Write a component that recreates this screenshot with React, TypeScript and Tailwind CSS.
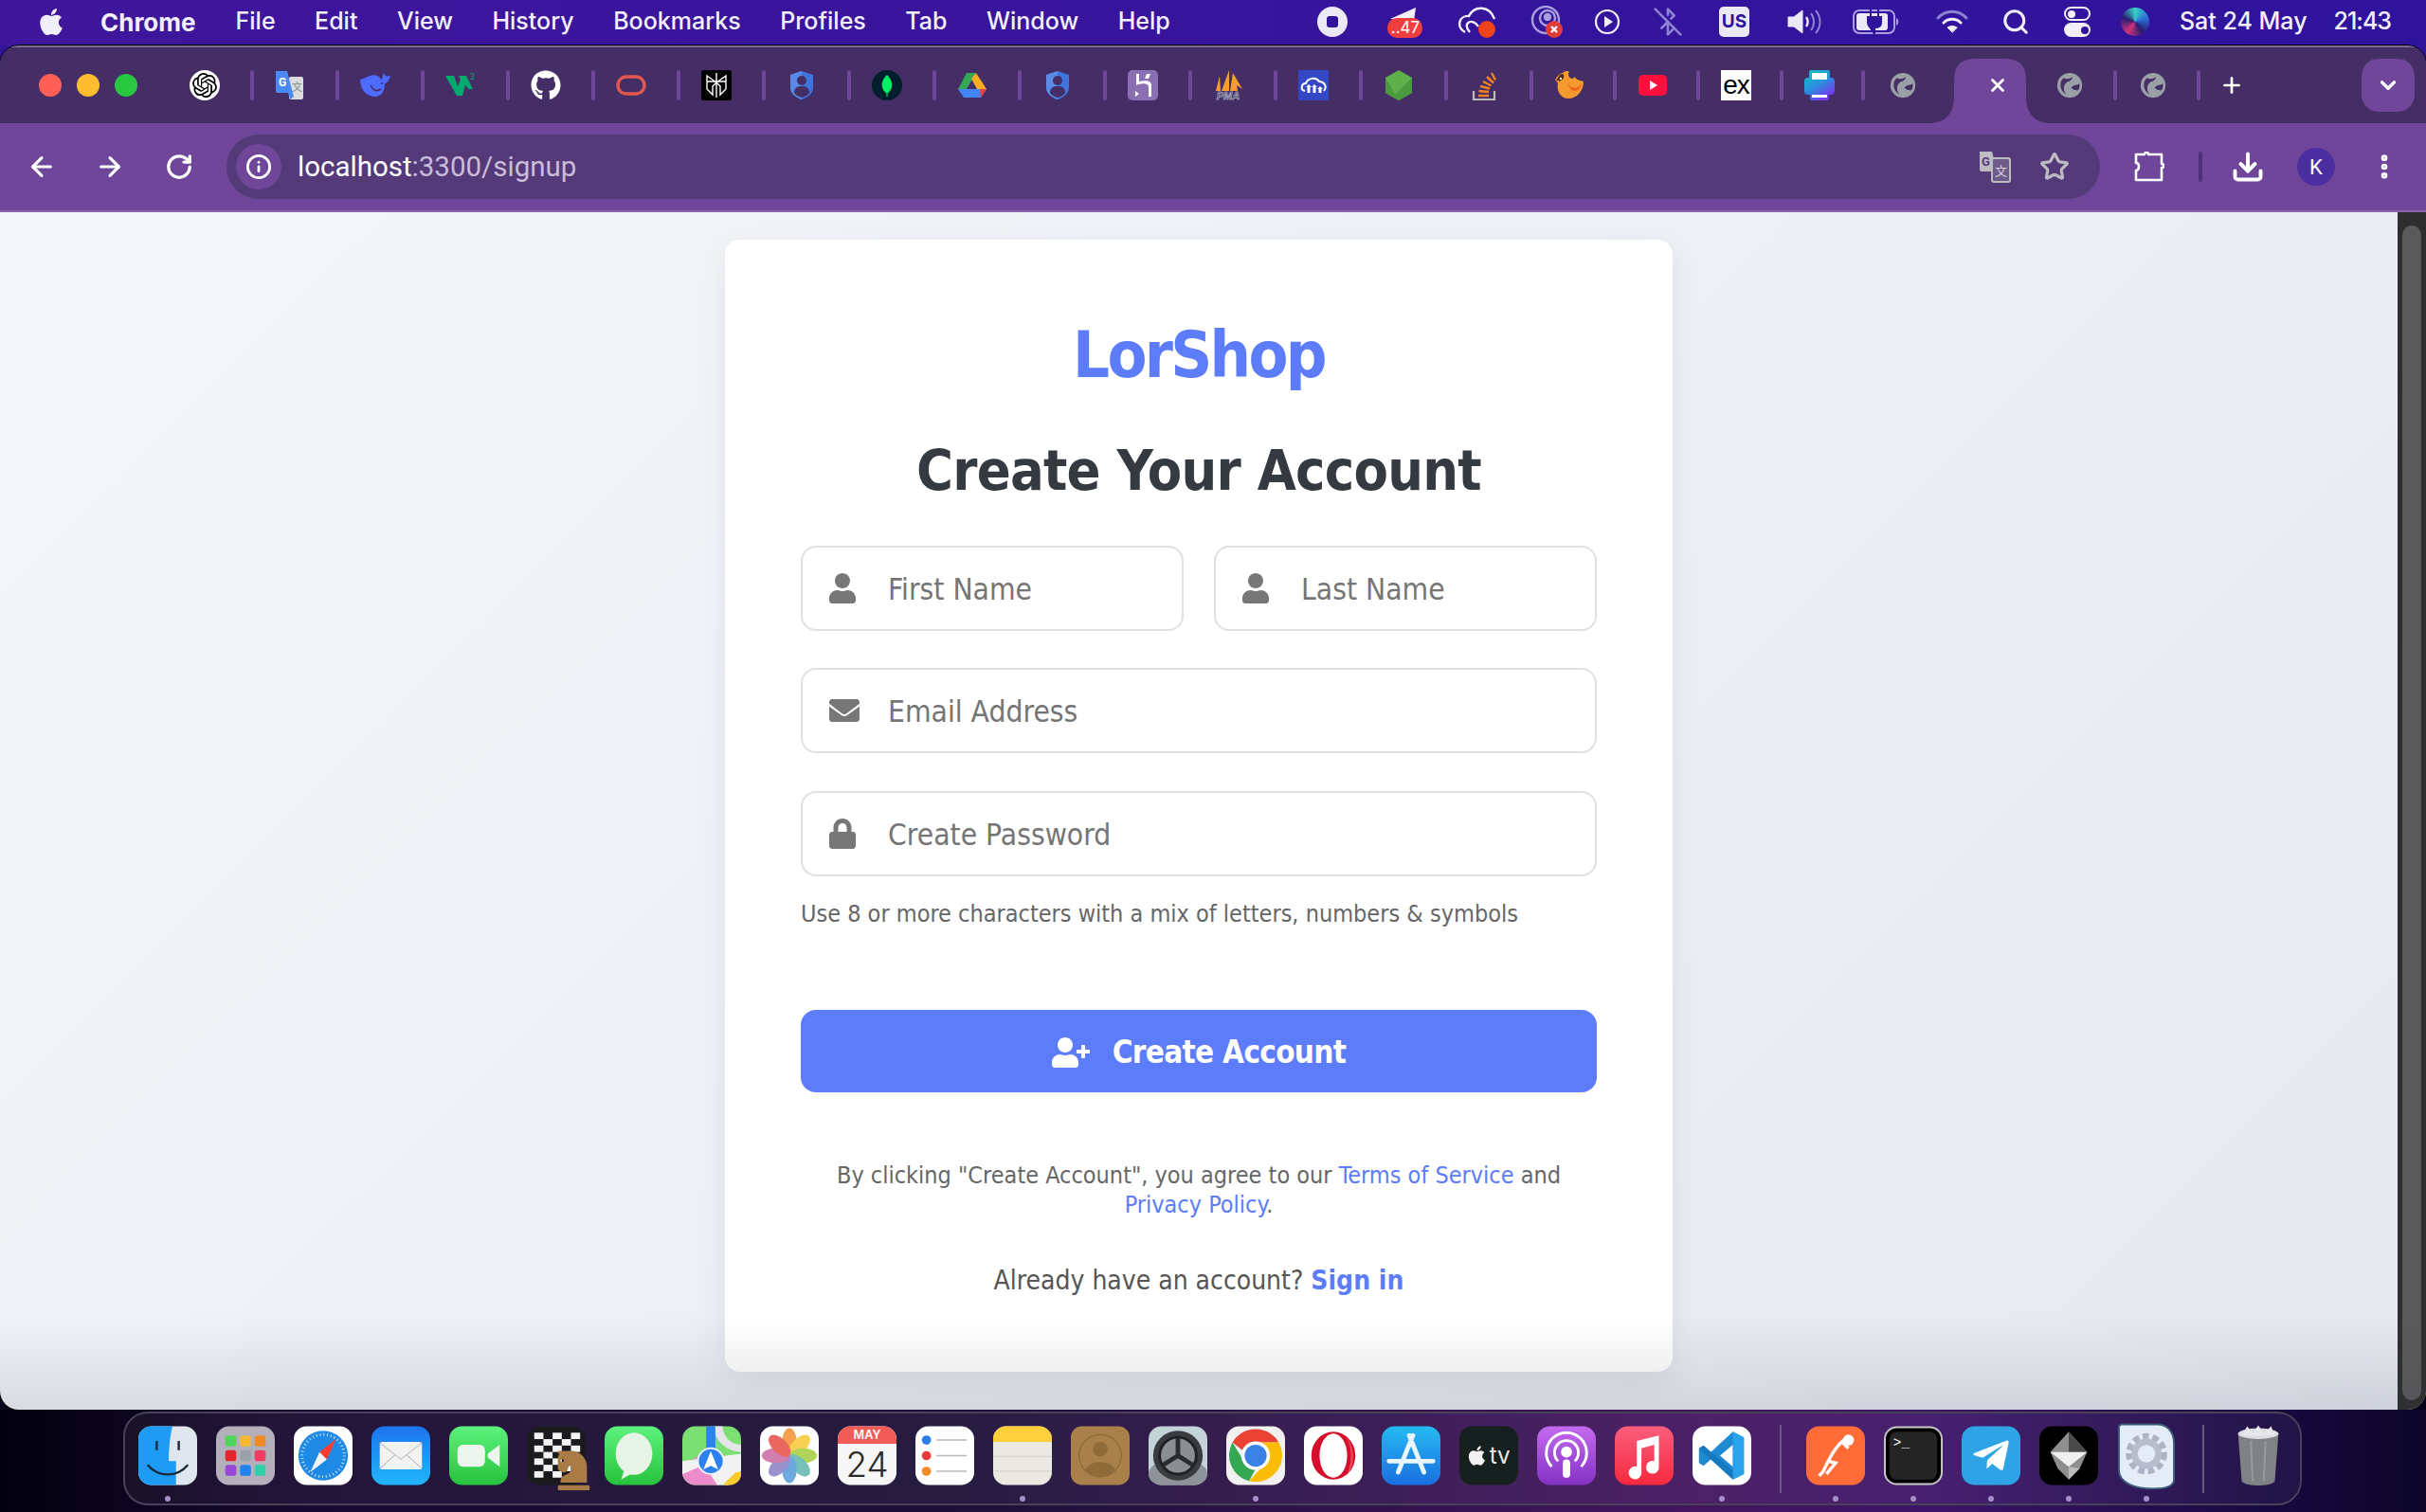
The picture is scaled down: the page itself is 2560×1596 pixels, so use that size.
import type { ReactNode } from "react";
import { ArrowLeft, ArrowRight, BluetoothOff, Download, RotateCw, Search, Star, X, Plus, ChevronDown, EllipsisVertical, Info } from "lucide-react";
import { FaApple, FaChessKnight, FaEnvelope, FaGithub, FaLock, FaTelegramPlane, FaUser, FaUserPlus } from "react-icons/fa";
import { SiOpenai } from "react-icons/si";

const menuItems = ["File", "Edit", "View", "History", "Bookmarks", "Profiles", "Tab", "Window", "Help"];

function Globe() {
  return (
    <svg viewBox="0 0 32 32" className="h-[28px] w-[28px]">
      <circle cx="16" cy="16" r="15" fill="#9aa0a6" />
      <path d="M9 7 C12 9 15 9 19 6 C20 9 16 11 13 12 C10 14 9 17 9 20 C9 23 10 25 12 27 C8 25 5 21 5 16 C5 12 6 9 9 7 Z" fill="#452d66" />
      <path d="M18 19 C20 15 24 17 28 14 C28 17 28 20 26 22 C24 22 21 22 18 19 Z" fill="#452d66" />
    </svg>
  );
}

function ShieldIcon() {
  return (
    <svg viewBox="0 0 32 32" className="h-8 w-8">
      <path d="M16 1 L28 5 V18 C28 25 22 29 16 31 C10 29 4 25 4 18 V5 Z" fill="#3f74dc" />
      <path d="M16 1 L4 5 V18 C4 25 10 29 16 31 Z" fill="#5a8ae6" />
      <circle cx="16" cy="11" r="5" fill="#452d66" />
      <path d="M8 24 C8 18 12 17 16 17 C20 17 24 18 24 24 C22 27 19 28 16 29 C13 28 10 27 8 24 Z" fill="#452d66" />
    </svg>
  );
}

const tabIcons: ReactNode[] = [
  <div key="gpt" className="flex h-8 w-8 items-center justify-center rounded-full bg-white">
    <SiOpenai className="h-[26px] w-[26px] text-black" />
  </div>,
  <svg key="tr" viewBox="0 0 32 32" className="h-8 w-8">
    <rect x="15" y="7" width="15" height="24" rx="2" fill="#dcdcdc" />
    <path d="M1 1 H13 L20 28 L16 31 L14 24 H3 A2 2 0 0 1 1 22 Z" fill="#4a8af4" />
    <text x="4" y="17" fontSize="12" fontWeight="700" fill="#fff" fontFamily="Roboto, sans-serif">G</text>
    <text x="18" y="22" fontSize="11" fill="#7a8a8a" fontFamily="'Noto Sans CJK SC', sans-serif">文</text>
  </svg>,
  <svg key="ds" viewBox="0 0 32 32" className="h-8 w-8">
    <path d="M0 10 C0 22 9 29 17 28 C24 27 26 20 26 14 C28 14 31 11 32 5 C30 7 28 7 27 6 L24 3 C24 7 24 9 22 10 C20 5 14 4 8 7 C4 9 1 10 0 10 Z" fill="#4d6bfe" />
    <path d="M11 16 C14 22 18 23 22 20" stroke="#452d66" strokeWidth="1.6" fill="none" />
    <circle cx="23" cy="14" r="1" fill="#452d66" />
  </svg>,
  <svg key="w3" viewBox="0 0 32 32" className="h-8 w-8">
    <path d="M0 6 H9 L13 17 L16 10 L14 6 H22 L29 20 L25 20 L21 16 L18 27 H12 Z" fill="#04aa6d" />
    <text x="26" y="10" fontSize="9" fill="#04aa6d" fontFamily="Roboto, sans-serif">3</text>
  </svg>,
  <FaGithub key="gh" className="h-8 w-8 text-white" />,
  <svg key="oracle" viewBox="0 0 32 32" className="h-8 w-8">
    <rect x="2" y="7" width="28" height="18" rx="9" fill="none" stroke="#e2574c" strokeWidth="3.5" />
  </svg>,
  <svg key="px" viewBox="0 0 32 32" className="h-8 w-8">
    <rect width="32" height="32" rx="2" fill="#000" />
    <path d="M16 3 V29 M6 6 L16 13 L26 6 V20 L20 26 V17 L16 13 L12 17 V26 L6 20 Z M6 12 H26" stroke="#fff" strokeWidth="1.4" fill="none" />
  </svg>,
  <ShieldIcon key="s1" />,
  <svg key="mongo" viewBox="0 0 32 32" className="h-8 w-8">
    <circle cx="16" cy="16" r="16" fill="#001e2b" />
    <path d="M16 5 C20 9 22 13 21 18 C20 22 18 23 16.6 24.5 L16.5 28 H15.5 L15.4 24.5 C14 23 12 22 11 18 C10 13 12 9 16 5 Z" fill="#00ed64" />
  </svg>,
  <svg key="drive" viewBox="0 0 32 32" className="h-8 w-8">
    <path d="M10 3 H20 L10 20 H1 Z" fill="#34a853" />
    <path d="M20 3 L31 20 H21 L15 9 Z" fill="#fbac20" />
    <path d="M7 29 L1 20 H31 L25 29 Z" fill="#4285f4" />
    <path d="M25 29 L31 20 H24 Z" fill="#ea4335" />
  </svg>,
  <ShieldIcon key="s2" />,
  <svg key="heroku" viewBox="0 0 32 32" className="h-8 w-8">
    <rect width="32" height="32" rx="5" fill="#8a6fb3" />
    <path d="M9 4 V16 C13 14 22 13 22 18 V28 H25 V16 C25 10 17 11 12 12 V4 Z M20 4 H24 L22 9 H18 Z M8 22 L12 25 L8 28 Z" fill="#fff" />
  </svg>,
  <svg key="pma" viewBox="0 0 32 32" className="h-8 w-8">
    <path d="M3 22 L7 6 L8 22 Z M9 22 L17 0 L17 22 Z M18 22 L21 3 L31 20 L25 16 L26 22 Z" fill="#f89c2e" />
    <text x="16" y="31" textAnchor="middle" fontSize="11" fontWeight="700" fontStyle="italic" fill="#38405a" stroke="#d7d9e2" strokeWidth="0.5" fontFamily="'Liberation Sans', sans-serif">PMA</text>
  </svg>,
  <svg key="cloud" viewBox="0 0 32 32" className="h-8 w-8">
    <rect width="32" height="32" fill="#3448c5" />
    <path d="M7 22 C2 21 3 14 8 14 C10 8 19 7 22 12 C27 12 31 17 27 22" stroke="#fff" strokeWidth="2" fill="none" />
    <path d="M11 15 L14 18 H12.5 V24 H9.5 V18 H8 Z M17 15 L20 18 H18.5 V24 H15.5 V18 H14 Z M23 17 L26 20 H24.5 V24 H21.5 V20 H20 Z" fill="#fff" />
  </svg>,
  <svg key="node" viewBox="0 0 32 32" className="h-8 w-8">
    <path d="M16 0 L30 8 V24 L16 32 L2 24 V8 Z" fill="#5fb04a" />
    <path d="M2 8 L16 32 L2 24 Z" fill="#4d9a3c" />
    <path d="M30 8 V24 L16 32 L12 26 Z" fill="#4a9a3f" />
  </svg>,
  <svg key="so" viewBox="0 0 32 32" className="h-8 w-8">
    <path d="M5 22 V31 H27 V22" fill="none" stroke="#bcbbbb" strokeWidth="2.2" />
    <path d="M10 27 H21 M10.5 22 L21 23 M12 17 L22 19.5 M15 12 L23.5 16.5 M19 7 L26 13.5 M24 3 L28 10.5" stroke="#f48024" strokeWidth="2.4" fill="none" />
  </svg>,
  <svg key="bird" viewBox="0 0 32 32" className="h-8 w-8">
    <path d="M1 10 C3 7 5 4 9 3 C12 0 15 1 16 2 C14 4 15 7 18 9 C20 9 21 8 22 7 C23 10 27 11 31 12 C31 22 24 30 15 30 C7 30 2 22 4 14 Z" fill="#f59a2c" />
    <path d="M2 11 L6 5 C9 3 11 4 10 8 C9 11 6 12 4 11 Z" fill="#4a2d1a" />
    <circle cx="7" cy="9" r="1.2" fill="#fff" />
    <path d="M14 14 C18 20 24 20 29 15 C26 24 18 25 14 14 Z" fill="#f0642a" />
  </svg>,
  <svg key="yt" viewBox="0 0 32 32" className="h-8 w-8">
    <rect x="1" y="5" width="30" height="22" rx="5" fill="#ff0f3c" />
    <path d="M13 11 L21 16 L13 21 Z" fill="#fff" />
  </svg>,
  <div key="ex" className="flex h-8 w-8 items-center justify-center bg-white font-['Liberation_Sans',sans-serif] text-[28px] leading-none tracking-[-1px] text-black">
    ex
  </div>,
  <svg key="print" viewBox="0 0 32 32" className="h-8 w-8">
    <defs>
      <linearGradient id="printGrad" x1="0" y1="0" x2="0.6" y2="1">
        <stop offset="0" stopColor="#12c8bc" />
        <stop offset="0.55" stopColor="#2a8fe0" />
        <stop offset="1" stopColor="#7a35ef" />
      </linearGradient>
    </defs>
    <path d="M5 2 A2 2 0 0 1 7 0 H25 A2 2 0 0 1 27 2 V8 H28 A4 4 0 0 1 32 12 V22 A4 4 0 0 1 28 26 H26 V30 A2 2 0 0 1 24 32 H8 A2 2 0 0 1 6 30 V26 H4 A4 4 0 0 1 0 22 V12 A4 4 0 0 1 4 8 H5 Z" fill="url(#printGrad)" />
    <rect x="8" y="3" width="16" height="7" fill="#fff" />
    <rect x="8" y="26" width="16" height="3" fill="#fff" />
  </svg>,
];

/* 1タブ分のスロット（右端に区切り線） */
function TabSlot({ className, children }: { className: string; children: ReactNode }) {
  return (
    <div className={`flex h-full items-center pl-[22px] ${className}`}>
      {children}
      <span className="ml-auto h-8 w-1 rounded-[2px] bg-[#6f4699]" />
    </div>
  );
}

function TabStrip() {
  return (
    <div className="flex h-[82px] items-center border-t-2 border-[#7d6b94] bg-[#452d66]">
      <div className="ml-[41px] mr-[33px] flex gap-[16px]">
        <span className="h-6 w-6 rounded-full bg-[#ff5f57]" />
        <span className="h-6 w-6 rounded-full bg-[#febc2e]" />
        <span className="h-6 w-6 rounded-full bg-[#28c840]" />
      </div>
      <div className="flex h-8 items-center">
        {tabIcons.slice(0, 16).map((icon, i) => (
          <TabSlot className="w-[90px]" key={i}>{icon}</TabSlot>
        ))}
        <TabSlot className="w-[88px]">{tabIcons[16]}</TabSlot>
        <TabSlot className="w-[88px]">{tabIcons[17]}</TabSlot>
        <TabSlot className="w-[88px]">{tabIcons[18]}</TabSlot>
        <TabSlot className="w-[86px]">{tabIcons[19]}</TabSlot>
        <div className="flex h-full w-[94px] items-center pl-[26px]"><Globe /></div>
        {/* アクティブタブ */}
        <div className="relative flex h-full w-[76px] items-center justify-center">
          <svg viewBox="0 0 130 68" className="absolute left-[-27px] top-[-12px] h-[68px] w-[130px]">
            <path d="M0 68 C18 68 27 58 27 40 V22 Q27 0 49 0 H81 Q103 0 103 22 V40 C103 58 112 68 130 68 Z" fill="#6f4699" />
          </svg>
          <X className="relative ml-[16px] h-[22px] w-[22px] text-white" strokeWidth={3} />
        </div>
        <div className="flex h-full w-[96px] items-center pl-[32px]">
          <Globe />
          <span className="ml-auto h-8 w-1 rounded-[2px] bg-[#6f4699]" />
        </div>
        <div className="flex h-full w-[88px] items-center pl-[24px]">
          <Globe />
          <span className="ml-auto h-8 w-1 rounded-[2px] bg-[#6f4699]" />
        </div>
        <Plus className="ml-[20px] h-[26px] w-[26px] text-white" strokeWidth={2.5} />
      </div>
      <div className="ml-auto mr-[12px] flex h-[56px] w-[56px] items-center justify-center rounded-[18px] bg-[#6f4699]">
        <ChevronDown className="h-[26px] w-[26px] text-white" strokeWidth={3} />
      </div>
    </div>
  );
}

function Toolbar() {
  return (
    <div className="flex h-[94px] items-center border-b-2 border-[#8a68b0] bg-[#6f4699]">
      <ArrowLeft className="ml-[28px] h-8 w-8 text-white" strokeWidth={2.4} />
      <ArrowRight className="ml-[40px] h-8 w-8 text-white" strokeWidth={2.4} />
      <RotateCw className="ml-[42px] h-[30px] w-[30px] text-white" strokeWidth={2.6} />
      <div className="ml-[35px] flex h-[68px] w-[974px] min-w-0 flex-1 items-center rounded-full bg-[#553a7a] pl-[10px] pr-[32px]">
        <div className="flex h-12 w-12 items-center justify-center rounded-full bg-[#6f4699]">
          <Info className="h-[28px] w-[28px] text-white" strokeWidth={2.4} />
        </div>
        <div className="ml-[17px] font-['Roboto',sans-serif] text-[29.5px] text-white">
          localhost<span className="text-[#c9bdd9]">:3300/signup</span>
        </div>
        <svg viewBox="0 0 34 34" className="ml-auto h-[34px] w-[34px]">
          <path d="M1 1 H14 L21 28 L17 22 H3 A2 2 0 0 1 1 20 Z" fill="#bdbac2" />
          <rect x="14" y="8" width="19" height="25" rx="2" fill="#6f5a8c" stroke="#bdbac2" strokeWidth="2" />
          <text x="3" y="16" fontSize="13" fontWeight="700" fill="#553a7a" fontFamily="Roboto, sans-serif">G</text>
          <text x="17" y="26" fontSize="13" fill="#d4d1d8" fontFamily="'Noto Sans CJK SC', sans-serif">文</text>
        </svg>
        <Star className="ml-[30px] h-8 w-8 text-[#bdbac2]" strokeWidth={2.4} />
      </div>
      <svg viewBox="0 0 32 32" className="ml-[36px] h-8 w-8 shrink-0" fill="none" stroke="#fff" strokeWidth="2.6">
        <path d="M2 3 H11 C11 0 15 0 15 3 H29 V13 C32 13 32 17 29 17 V30 H2 V20 C6 19 6 12 2 12 Z" strokeLinejoin="round" />
      </svg>
      <span className="ml-[36px] h-8 w-1 shrink-0 rounded-[2px] bg-[#4e2f7c]" />
      <Download className="ml-[30px] h-9 w-9 shrink-0 text-white" strokeWidth={2.6} />
      <div className="ml-[34px] flex h-10 w-10 shrink-0 items-center justify-center rounded-full bg-[#4b2fa0] font-['Roboto',sans-serif] text-[22px] text-white">
        K
      </div>
      <EllipsisVertical className="ml-[36px] mr-[28px] h-8 w-8 shrink-0 text-white" strokeWidth={3} />
    </div>
  );
}

function MenuBar() {
  return (
    <div className="flex h-[48px] items-center bg-[linear-gradient(90deg,#3f169c,#2f139c)] pb-[2px] font-['Inter',sans-serif] text-[25px] text-[#f3f0fb]">
      <FaApple className="ml-[38px] h-[32px] w-[32px] text-[#f0eef8]" />
      <span className="ml-[36px] text-[26px] font-bold">Chrome</span>
      <div className="ml-[42px] flex gap-[41.5px] font-medium">
        {menuItems.map((item) => (
          <span key={item}>{item}</span>
        ))}
      </div>
      <div className="ml-auto flex items-center">
        <div className="flex w-[78px] justify-center">
          <div className="flex h-8 w-8 items-center justify-center rounded-full bg-[#ece9f6]"><span className="h-3 w-3 rounded-[3px] bg-[#2f139c]" /></div>
        </div>
        <div className="flex w-[76px] justify-center">
          <svg viewBox="0 0 38 34" className="h-[34px] w-[38px]">
            <path d="M3 14 L30 2 L28 16 Z" fill="#f3f0fb" />
            <rect y="13" width="37" height="21" rx="10" fill="#ee3e3e" />
            <text x="19" y="29" textAnchor="middle" fontSize="17" fill="#fff" fontFamily="Inter, sans-serif">..47</text>
          </svg>
        </div>
        <div className="flex w-[74px] justify-center">
          <svg viewBox="0 0 40 34" className="h-[34px] w-[40px]" fill="none" stroke="#f3f0fb" strokeWidth="2.4">
            <path d="M8 28 C-2 22 2 10 12 11 C18 -1 34 0 39 14" />
            <path d="M13 28 C4 18 16 12 22 22" />
            <circle cx="31" cy="25" r="9" fill="#f0431a" stroke="none" />
          </svg>
        </div>
        <div className="flex w-[74px] justify-center">
          <svg viewBox="0 0 34 34" className="h-[34px] w-[34px]" fill="none" stroke="#a99fe0" strokeWidth="2.4">
            <circle cx="16" cy="15" r="14" />
            <circle cx="18" cy="13" r="8" />
            <circle cx="18" cy="12" r="3" fill="#a99fe0" />
            <circle cx="25" cy="25" r="9" fill="#e13c3c" stroke="none" />
            <path d="M22 22 L28 28 M28 22 L22 28" stroke="#fff" />
          </svg>
        </div>
        <div className="flex w-[54px] justify-center">
          <svg viewBox="0 0 28 28" className="h-[28px] w-[28px]" fill="none" stroke="#f3f0fb" strokeWidth="2.2">
            <circle cx="14" cy="14" r="12" />
            <path d="M11 8 L20 14 L11 20 Z" fill="#f3f0fb" stroke="none" />
          </svg>
        </div>
        <div className="flex w-[74px] justify-center"><BluetoothOff className="h-[32px] w-[32px] text-[#8f83d4]" strokeWidth={2} /></div>
        <div className="flex w-[66px] justify-center">
          <div className="flex h-8 w-8 items-center justify-center rounded-[5px] bg-[#ece9f6] text-[19px] font-bold text-[#2f139c]">US</div>
        </div>
        <div className="flex w-[82px] justify-center">
          <svg viewBox="0 0 38 30" className="h-[30px] w-[38px]" fill="none">
            <path d="M2 10 H8 L17 3 V27 L8 20 H2 Z" fill="#ece9f6" stroke="#ece9f6" strokeLinejoin="round" />
            <path d="M21 10 C23 13 23 17 21 20" stroke="#ece9f6" strokeWidth="2.4" />
            <path d="M26 6 C30 11 30 19 26 24 M31 3 C37 10 37 20 31 27" stroke="#8f83d4" strokeWidth="2" />
          </svg>
        </div>
        <div className="flex w-[70px] justify-center">
          <svg viewBox="0 0 50 26" className="h-[26px] w-[50px]">
            <rect x="1" y="1" width="43" height="24" rx="6" fill="none" stroke="#a99fe0" strokeWidth="2" />
            <rect x="4" y="4" width="33" height="18" rx="3" fill="#ece9f6" />
            <path d="M46 9 C49 10 49 16 46 17 Z" fill="#a99fe0" />
            <path d="M19 0 V8 M27 0 V8 M16 8 H30 V14 C30 18 26 19 23 19 V26 C20 19 16 18 16 14 Z" stroke="#2f139c" strokeWidth="2" fill="#2f139c" />
          </svg>
        </div>
        <div className="flex w-[90px] justify-center">
          <svg viewBox="0 0 34 26" className="h-[26px] w-[34px]" fill="none" strokeLinecap="round">
            <path d="M2 9 C10 0 24 0 32 9" stroke="#8f83d4" strokeWidth="3" />
            <path d="M8 14 C13 9 21 9 26 14" stroke="#f3f0fb" strokeWidth="3" />
            <path d="M17 24 L12 19 C15 17 19 17 22 19 Z" fill="#f3f0fb" stroke="#f3f0fb" />
          </svg>
        </div>
        <div className="flex w-[44px] justify-center"><Search className="h-[30px] w-[30px] text-[#f3f0fb]" strokeWidth={2.4} /></div>
        <div className="flex w-[86px] justify-center">
          <div className="flex h-[32px] w-[28px] flex-col gap-[2px]">
            <div className="flex h-[15px] items-center rounded-full border-2 border-[#f3f0fb] px-[2px]"><span className="h-2 w-2 rounded-full bg-[#f3f0fb]" /></div>
            <div className="flex h-[15px] items-center justify-end rounded-full bg-[#f3f0fb] px-[2px]"><span className="h-2 w-2 rounded-full bg-[#2f139c]" /></div>
          </div>
        </div>
        <div className="flex w-[36px] justify-center">
          <span className="h-[30px] w-[30px] rounded-full bg-[conic-gradient(#36d0c8,#2b6ed8,#2b1a70,#d0357a,#2b1a70,#36d0c8)]" />
        </div>
        <span className="ml-[29px] font-medium">Sat 24 May</span>
        <span className="ml-[28px] mr-[37px] font-medium tracking-[-1px]">21:43</span>
      </div>
    </div>
  );
}

function Field({ icon, placeholder, className }: { icon: ReactNode; placeholder: string; className: string }) {
  return (
    <label className={`flex h-[90px] items-center rounded-[16px] border-2 border-[#e0e0e0] bg-white pl-[28px] ${className}`}>
      <span className="flex w-[32px] shrink-0 items-center text-[#777777]">{icon}</span>
      <input
        className="ml-[30px] w-full min-w-0 bg-transparent pt-[3px] text-[31.5px] text-[#333333] outline-none placeholder:text-[#757575]"
        placeholder={placeholder}
      />
    </label>
  );
}

function SignupCard() {
  return (
    <div className="mx-auto mb-[40px] mt-[29px] h-[1195px] w-[1000px] rounded-[16px] bg-white px-[80px] pt-[80px] font-['DejaVu_Sans_Condensed','DejaVu_Sans',sans-serif] shadow-[0_8px_32px_rgba(0,0,0,0.07)] [font-stretch:condensed]">
      <div className="text-center text-[68px] font-bold leading-[84px] tracking-[-2.7px] text-[#5c7cfa]">LorShop</div>
      <h1 className="mt-[44px] text-center text-[59px] font-bold leading-[72px] tracking-[-0.75px] text-[#343a40]">Create Your Account</h1>
      <div className="mt-[43px] flex gap-[32px]">
        <Field className="w-[404px]" icon={<FaUser className="h-8 w-7" />} placeholder="First Name" />
        <Field className="w-[404px]" icon={<FaUser className="h-8 w-7" />} placeholder="Last Name" />
      </div>
      <Field className="mt-[39px]" icon={<FaEnvelope className="h-8 w-8" />} placeholder="Email Address" />
      <Field className="mt-[40px]" icon={<FaLock className="h-8 w-7" />} placeholder="Create Password" />
      <p className="mt-[21px] text-[25px] leading-[38px] text-[#666666]">Use 8 or more characters with a mix of letters, numbers &amp; symbols</p>
      <button className="mt-[82px] flex h-[87px] w-full items-center justify-center gap-[24px] rounded-[16px] bg-[#5c7cfa] pt-[2px] text-[33px] font-bold tracking-[-0.7px] text-white">
        <FaUserPlus className="h-[32px] w-[40px]" />
        Create Account
      </button>
      <p className="mt-[72px] text-center text-[25px] leading-[31px] text-[#666666]">
        By clicking "Create Account", you agree to our <span className="text-[#5c7cfa]">Terms of Service</span> and
        <br />
        <span className="text-[#5c7cfa]">Privacy Policy</span>.
      </p>
      <p className="mt-[46px] text-center text-[28px] leading-[38px] text-[#555555]">
        Already have an account? <span className="font-bold text-[#5c7cfa]">Sign in</span>
      </p>
    </div>
  );
}

function Tile({ children, dot }: { children: ReactNode; dot?: boolean }) {
  return (
    <div className="flex w-[62px] shrink-0 flex-col items-center">
      <svg viewBox="0 0 64 64" className="h-[63px] w-[62px] overflow-visible">{children}</svg>
      <span className={`mt-[11px] h-[6px] w-[6px] rounded-full ${dot ? "bg-[#a78fc9]" : "bg-transparent"}`} />
    </div>
  );
}

function DockDivider({ className }: { className: string }) {
  return <span className={`mb-[12px] h-[72px] w-[2px] shrink-0 self-center bg-[#6b5a80] ${className}`} />;
}

function Dock() {
  return (
    <div className="flex h-[108px] items-start bg-[linear-gradient(90deg,#03010f,#17092f_12%,#1d1038_40%,#43155f_70%,#3c1468_80%,#16093f_94%,#0c0528)] pl-[130px] pt-[2px]">
      <div className="flex h-[99px] w-[2299px] gap-[20px] rounded-[26px] border-2 border-[#4b4059] bg-white/5 pl-[14px] pt-[13px]">
        <Tile dot>
          <rect width="64" height="64" rx="14" fill="#dfe6ee" />
          <path d="M14 0 H37 C34 14 33 26 33 38 H41 V64 H14 A14 14 0 0 1 0 50 V14 A14 14 0 0 1 14 0 Z" fill="#1e9cf5" />
          <path d="M20 16 V26 M44 16 V26" stroke="#1d2a3a" strokeWidth="2.5" />
          <path d="M10 42 C22 56 42 56 54 42" stroke="#1d2a3a" strokeWidth="2.5" fill="none" />
        </Tile>
        <Tile>
          <rect width="64" height="64" rx="14" fill="#b3b0bb" />
          <rect x="10" y="10" width="12" height="12" rx="3" fill="#4fd65a" /><rect x="26" y="10" width="12" height="12" rx="3" fill="#f5b82e" /><rect x="42" y="10" width="12" height="12" rx="3" fill="#f08a24" />
          <rect x="10" y="26" width="12" height="12" rx="3" fill="#e5232b" /><rect x="26" y="26" width="12" height="12" rx="3" fill="#98a2a8" /><rect x="42" y="26" width="12" height="12" rx="3" fill="#f23c62" />
          <rect x="10" y="42" width="12" height="12" rx="3" fill="#9b45d6" /><rect x="26" y="42" width="12" height="12" rx="3" fill="#1f82ee" /><rect x="42" y="42" width="12" height="12" rx="3" fill="#2fcfa8" />
        </Tile>
        <Tile>
          <rect width="64" height="64" rx="14" fill="#fff" />
          <circle cx="32" cy="32" r="27" fill="#1f8ae6" />
          <circle cx="32" cy="32" r="23" fill="none" stroke="#cfe6fa" strokeWidth="3" strokeDasharray="1 3" />
          <path d="M46 14 L28 28 L36 36 Z" fill="#ff3b30" />
          <path d="M18 50 L28 28 L36 36 Z" fill="#f4f4f4" />
        </Tile>
        <Tile>
          <defs><linearGradient id="mailG" x1="0" y1="0" x2="0" y2="1"><stop offset="0" stopColor="#1c74ee" /><stop offset="1" stopColor="#20b6fb" /></linearGradient></defs>
          <rect width="64" height="64" rx="14" fill="url(#mailG)" />
          <rect x="9" y="17" width="46" height="30" rx="3" fill="#f2f2f2" />
          <path d="M9 18 L32 36 L55 18 M9 46 L26 31 M55 46 L38 31" stroke="#bfc4c9" strokeWidth="1.2" fill="none" />
        </Tile>
        <Tile>
          <defs><linearGradient id="ftG" x1="0" y1="0" x2="0" y2="1"><stop offset="0" stopColor="#5df27c" /><stop offset="1" stopColor="#27c23d" /></linearGradient></defs>
          <rect width="64" height="64" rx="14" fill="url(#ftG)" />
          <rect x="9" y="20" width="30" height="24" rx="6" fill="#eef5ee" />
          <path d="M42 30 L55 20 V44 L42 34 Z" fill="#eef5ee" />
        </Tile>
        <Tile>
          <rect width="64" height="64" rx="14" fill="#1b1b1f" />
          {[0, 1, 2, 3, 4, 5, 6].map((row) =>
            [0, 1, 2, 3, 4].map((col) =>
              (row + col) % 2 === 0 ? <rect key={`${row}-${col}`} x={8 + col * 10} y={7 + row * 7} width="10" height="7" fill="#f4f4f4" /> : null,
            ),
          )}
          <FaChessKnight x="28" y="24" size={46} color="#a97c46" />
        </Tile>
        <Tile>
          <defs><linearGradient id="msgG" x1="0" y1="0" x2="0" y2="1"><stop offset="0" stopColor="#5df27c" /><stop offset="1" stopColor="#27c23d" /></linearGradient></defs>
          <rect width="64" height="64" rx="14" fill="url(#msgG)" />
          <ellipse cx="32" cy="30" rx="20" ry="23" fill="#e6f3e6" />
          <path d="M22 46 L18 58 L32 50 Z" fill="#e6f3e6" />
        </Tile>
        <Tile>
          <rect width="64" height="64" rx="14" fill="#7bdf72" />
          <path d="M0 46 L22 28 L40 64 H14 A14 14 0 0 1 0 50 Z" fill="#ed8ccb" />
          <path d="M34 0 H44 A20 20 0 0 0 64 20 V28 A30 30 0 0 1 34 0 Z" fill="#e5e5e8" />
          <path d="M0 38 L64 30 V48 L50 64 H38 L24 42 L0 52 Z" fill="#f2f2f2" />
          <rect x="26" y="0" width="10" height="30" fill="#2b82ee" />
          <path d="M44 64 L58 50 L64 50 V52 A12 12 0 0 1 52 64 Z" fill="#f9cb2f" />
          <circle cx="31" cy="38" r="14" fill="#2b82ee" stroke="#e9f1fb" strokeWidth="2" />
          <path d="M31 27 L39 47 L31 43 L23 47 Z" fill="#fff" />
        </Tile>
        <Tile>
          <rect width="64" height="64" rx="14" fill="#fff" />
          <g transform="translate(32 32)" opacity="0.82">
            <ellipse cy="-15" rx="8" ry="15" fill="#f28c26" />
            <ellipse cy="-15" rx="8" ry="15" fill="#f6c52b" transform="rotate(45)" />
            <ellipse cy="-15" rx="8" ry="15" fill="#9fcb36" transform="rotate(90)" />
            <ellipse cy="-15" rx="8" ry="15" fill="#58b4a8" transform="rotate(135)" />
            <ellipse cy="-15" rx="8" ry="15" fill="#4c97d8" transform="rotate(180)" />
            <ellipse cy="-15" rx="8" ry="15" fill="#8378c4" transform="rotate(225)" />
            <ellipse cy="-15" rx="8" ry="15" fill="#c9629e" transform="rotate(270)" />
            <ellipse cy="-15" rx="8" ry="15" fill="#e6463e" transform="rotate(315)" />
          </g>
        </Tile>
        <Tile>
          <rect width="64" height="64" rx="14" fill="#f6f6f6" />
          <path d="M0 19 V14 A14 14 0 0 1 14 0 H50 A14 14 0 0 1 64 14 V19 Z" fill="#f25c57" />
          <text x="32" y="14" textAnchor="middle" fontSize="13" fontWeight="600" fill="#fff" fontFamily="Inter, sans-serif">MAY</text>
          <text x="32" y="55" textAnchor="middle" fontSize="38" fontWeight="300" fill="#2a2a2a" fontFamily="Inter, sans-serif">24</text>
        </Tile>
        <Tile>
          <rect width="64" height="64" rx="14" fill="#fff" />
          <circle cx="12" cy="15" r="5" fill="#2b7bea" /><circle cx="12" cy="32" r="5" fill="#ea3a35" /><circle cx="12" cy="49" r="5" fill="#f08a24" />
          <path d="M23 15 H56 M23 32 H56 M23 49 H56" stroke="#b9b9b9" strokeWidth="1.5" />
        </Tile>
        <Tile dot>
          <rect width="64" height="64" rx="14" fill="#ece9e2" />
          <path d="M0 17 V14 A14 14 0 0 1 14 0 H50 A14 14 0 0 1 64 14 V17 Z" fill="#fdd03b" />
          <path d="M0 33 H64 M0 49 H64" stroke="#d9d6cf" strokeWidth="1.5" />
        </Tile>
        <Tile>
          <rect width="64" height="64" rx="12" fill="#a98049" />
          <circle cx="32" cy="32" r="23" fill="none" stroke="#8f6b3a" strokeWidth="1.5" />
          <circle cx="32" cy="25" r="8" fill="#8f6b3a" />
          <path d="M16 48 C18 36 46 36 48 48 C42 56 22 56 16 48 Z" fill="#8f6b3a" />
        </Tile>
        <Tile>
          <rect width="64" height="64" rx="14" fill="#c4d3d8" />
          <rect y="40" width="64" height="24" rx="14" fill="#8d9398" />
          <circle cx="32" cy="32" r="27" fill="#3a3d40" />
          <circle cx="32" cy="32" r="20" fill="#8b8f92" stroke="#1f2123" strokeWidth="3" />
          <path d="M32 32 V13 M32 32 L16 42 M32 32 L48 42" stroke="#2a2c2e" strokeWidth="5" />
        </Tile>
        <Tile dot>
          <rect width="64" height="64" rx="14" fill="#f1f1f1" />
          <g transform="translate(32 32) scale(1.2) translate(-32 -32)">
            <path d="M32 8 A24 24 0 0 1 53 20 H32 A12 12 0 0 0 21 28 L11 20 A24 24 0 0 1 32 8 Z" fill="#ea4335" />
            <path d="M11 20 L23 40 A12 12 0 0 0 32 44 L26 55 A24 24 0 0 1 11 20 Z" fill="#34a853" />
            <path d="M53 20 A24 24 0 0 1 26 55 L42 38 A12 12 0 0 0 44 28 L32 20 Z" fill="#fbbc05" />
            <circle cx="32" cy="32" r="13" fill="#fff" />
            <circle cx="32" cy="32" r="10" fill="#3b82e6" />
          </g>
        </Tile>
        <Tile>
          <rect width="64" height="64" rx="14" fill="#fff" />
          <ellipse cx="32" cy="32" rx="24" ry="26" fill="#d6102c" />
          <ellipse cx="32" cy="32" rx="15" ry="24" fill="#fff" />
          <path d="M45 10 C54 18 58 42 46 54 C54 40 52 20 45 10 Z" fill="#f04a5e" />
        </Tile>
        <Tile>
          <defs><linearGradient id="asG" x1="0" y1="0" x2="0" y2="1"><stop offset="0" stopColor="#25baf3" /><stop offset="1" stopColor="#1a6fe0" /></linearGradient></defs>
          <rect width="64" height="64" rx="14" fill="url(#asG)" />
          <path d="M34 10 L18 50 M30 10 L46 50 M8 38 H56" stroke="#eaf6ff" strokeWidth="5" strokeLinecap="round" />
        </Tile>
        <Tile>
          <rect width="64" height="64" rx="14" fill="#15201f" />
          <FaApple x="7" y="20" size={24} color="#f2f2f2" />
          <text x="44" y="41" textAnchor="middle" fontSize="25" fill="#e8e8e8" fontFamily="Inter, sans-serif">tv</text>
        </Tile>
        <Tile>
          <defs><linearGradient id="podG" x1="0" y1="0" x2="0" y2="1"><stop offset="0" stopColor="#c36aef" /><stop offset="1" stopColor="#8532c5" /></linearGradient></defs>
          <rect width="64" height="64" rx="14" fill="url(#podG)" />
          <g fill="none" stroke="#fff" strokeWidth="3">
            <path d="M16 44 A22 22 0 1 1 48 44" />
            <path d="M23 38 A13 13 0 1 1 41 38" />
          </g>
          <circle cx="32" cy="28" r="6" fill="#fff" />
          <rect x="28" y="36" width="8" height="20" rx="4" fill="#fff" />
        </Tile>
        <Tile>
          <defs><linearGradient id="muG" x1="0" y1="0" x2="0" y2="1"><stop offset="0" stopColor="#fb5e7c" /><stop offset="1" stopColor="#f6293f" /></linearGradient></defs>
          <rect width="64" height="64" rx="14" fill="url(#muG)" />
          <path d="M24 16 L48 10 V44 A7 7 0 1 1 43 38 V20 L29 24 V50 A7 7 0 1 1 24 44 Z" fill="#fff" />
        </Tile>
        <Tile dot>
          <rect width="64" height="64" rx="14" fill="#fff" />
          <path d="M44 6 L56 12 V52 L44 58 L20 36 L12 43 L7 40 V24 L12 21 L20 28 Z" fill="#1f8ad2" />
          <path d="M44 20 L30 32 L44 44 Z" fill="#fff" />
          <path d="M44 6 L56 12 V52 L44 58 Z" fill="#2aa3ec" />
          <path d="M7 24 L12 21 L44 48 V58 Z" fill="#0f6eb8" opacity="0.6" />
        </Tile>
        <DockDivider className="ml-[10px]" />
        <div className="ml-[6px]">
          <Tile dot>
            <rect width="64" height="64" rx="14" fill="#ff6c37" />
            <path d="M46 12 C38 16 30 26 24 38 L18 50 L14 54 M24 38 L32 40 L22 52 M40 18 L46 24" stroke="#fff" strokeWidth="3.5" fill="none" />
            <circle cx="46" cy="15" r="6" fill="#fff" />
          </Tile>
        </div>
        <Tile dot>
          <rect width="64" height="64" rx="14" fill="#c9c9c9" />
          <rect x="2" y="2" width="60" height="60" rx="12" fill="#000" />
          <rect x="6" y="6" width="52" height="52" rx="8" fill="#252525" />
          <text x="10" y="22" fontSize="15" fill="#fff" fontFamily="'Liberation Mono', monospace">&gt;_</text>
        </Tile>
        <Tile dot>
          <rect width="64" height="64" rx="14" fill="#2ea3e6" />
          <FaTelegramPlane x="10" y="10" size={44} color="#fff" />
        </Tile>
        <Tile dot>
          <rect width="64" height="64" rx="14" fill="#000" />
          <path d="M32 6 L52 28 L44 46 L32 58 L20 46 L12 28 Z" fill="#8e8e8e" />
          <path d="M32 6 L52 28 L32 28 Z" fill="#4a4a4a" />
          <path d="M12 28 H52 L32 44 Z" fill="#f0f0f0" />
          <path d="M32 44 L44 46 L32 58 Z" fill="#bbb" />
        </Tile>
        <Tile dot>
          <path d="M4 -2 H44 C56 -2 62 8 62 18 V58 C62 66 50 68 40 68 C20 68 2 62 2 48 V0 Z" fill="#e3ecf7" stroke="#3c5a7a" strokeWidth="2" />
          <circle cx="32" cy="30" r="17" fill="none" stroke="#aeb2c4" strokeWidth="11" strokeDasharray="6 3.5" />
          <circle cx="32" cy="30" r="13" fill="none" stroke="#b8bccc" strokeWidth="7" />
        </Tile>
        <DockDivider className="ml-[8px]" />
        <div className="ml-[6px]">
          <Tile>
            <path d="M10 8 C18 3 46 3 54 8 L50 60 C44 66 20 66 14 60 Z" fill="#7f8284" />
            <ellipse cx="32" cy="8" rx="22" ry="6" fill="#dcdde0" />
            <path d="M14 10 L20 0 L26 8 L32 -1 L38 8 L46 0 L50 10 Z" fill="#e8e8ea" />
            <path d="M24 16 L26 60 M40 16 L38 60" stroke="#989a9c" strokeWidth="2" />
          </Tile>
        </div>
      </div>
    </div>
  );
}

export default function App() {
  return (
    <div className="flex h-[1596px] w-[2560px] flex-col overflow-hidden bg-[linear-gradient(180deg,#35169b_0,#35169b_300px,#05021a_300px)]">
      <MenuBar />
      <div className="flex h-[1440px] flex-col overflow-hidden rounded-[20px] shadow-[0_0_0_1px_#000]">
        <TabStrip />
        <Toolbar />
        <div className="relative flex min-h-0 flex-1 bg-[linear-gradient(135deg,#f5f7fa,#e4e8f0)]">
          <div className="min-w-0 flex-1">
            <SignupCard />
          </div>
          <div className="w-[30px] shrink-0 bg-[#2e2e2e] px-[5px] pt-[14px]">
            <div className="h-[1240px] rounded-full bg-[#5a5a5a]" />
          </div>
          <div className="pointer-events-none absolute inset-x-0 bottom-0 h-[100px] bg-[linear-gradient(180deg,rgba(60,65,80,0),rgba(60,65,80,0.13))]" />
        </div>
      </div>
      <Dock />
    </div>
  );
}
